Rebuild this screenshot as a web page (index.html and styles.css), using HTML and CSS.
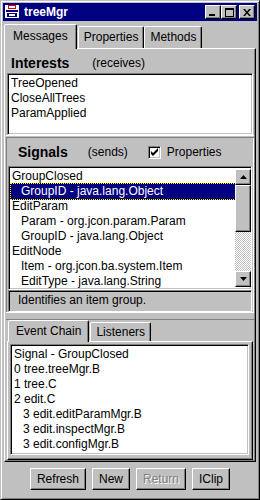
FILE: index.html
```html
<!DOCTYPE html>
<html lang="en">
<head>
    <meta charset="UTF-8">
    <title>treeMgr</title>
    <link rel="stylesheet" href="styles.css">
</head>
<body>
    <div class="window">
        <div class="titlebar">
            <svg class="app-icon" width="16" height="16" viewBox="0 0 16 16">
                <rect x="1" y="1" width="14" height="14" fill="#fff"/>
                <rect x="4" y="1" width="8" height="4" fill="#e00000"/>
                <rect x="5" y="2" width="6" height="2" fill="#fff"/>
                <rect x="2" y="6" width="12" height="2" fill="#000080"/>
                <rect x="3" y="9" width="10" height="4" fill="#000080"/>
                <rect x="5" y="10" width="6" height="2" fill="#fff"/>
                <rect x="1" y="14" width="14" height="1" fill="#000080"/>
            </svg>
            <span class="title">treeMgr</span>
            <div class="title-buttons">
                <span class="tbtn"><svg width="8" height="7" viewBox="0 0 8 7"><rect x="0" y="5" width="6" height="2" fill="#000"/></svg></span>
                <span class="tbtn"><svg width="9" height="9" viewBox="0 0 9 9"><rect x="0.5" y="0.5" width="8" height="8" fill="none" stroke="#000"/><rect x="0" y="0" width="9" height="2" fill="#000"/></svg></span>
                <span class="tbtn close"><svg width="8" height="7" viewBox="0 0 8 7"><path d="M0 0h2l2 2.5 2-2.5h2l-3 3.5 3 3.5h-2l-2-2.5-2 2.5h-2l3-3.5z" fill="#000"/></svg></span>
            </div>
        </div>

        <div class="tabs">
            <div class="tab active">Messages</div>
            <div class="tab">Properties</div>
            <div class="tab">Methods</div>
        </div>

        <div class="tab-panel">
            <div class="section-head interests-head">
                <span class="heading">Interests</span>
                <span class="note">(receives)</span>
            </div>
            <div class="list interests-list">
                <div class="row">TreeOpened</div>
                <div class="row">CloseAllTrees</div>
                <div class="row">ParamApplied</div>
            </div>

            <div class="splitter"></div>

            <div class="signals">
                <div class="section-head signals-head">
                    <span class="heading">Signals</span>
                    <span class="note">(sends)</span>
                    <span class="check"><svg width="9" height="9" viewBox="0 0 9 9"><path d="M1 3v3l2 2 5-5v-3l-5 5z" fill="#000"/></svg></span>
                    <span class="check-label">Properties</span>
                </div>
                <div class="scroll-list">
                    <div class="list-body">
                        <div class="row">GroupClosed</div>
                        <div class="row sub selected">GroupID - java.lang.Object</div>
                        <div class="row">EditParam</div>
                        <div class="row sub">Param - org.jcon.param.Param</div>
                        <div class="row sub">GroupID - java.lang.Object</div>
                        <div class="row">EditNode</div>
                        <div class="row sub">Item - org.jcon.ba.system.Item</div>
                        <div class="row sub">EditType - java.lang.String</div>
                    </div>
                    <div class="vscroll">
                        <span class="arrow"><svg width="7" height="4" viewBox="0 0 7 4"><path d="M3.5 0L7 4H0z" fill="#000"/></svg></span>
                        <span class="thumb"></span>
                        <span class="track"></span>
                        <span class="arrow"><svg width="7" height="4" viewBox="0 0 7 4"><path d="M0 0h7L3.5 4z" fill="#000"/></svg></span>
                    </div>
                </div>
                <div class="desc">Identifies an item group.</div>
            </div>

            <div class="splitter low"></div>

            <div class="chain">
                <div class="tabs small">
                    <div class="tab active">Event Chain</div>
                    <div class="tab">Listeners</div>
                </div>
                <div class="chain-panel">
                    <div class="list chain-list">
                        <div class="row">Signal - GroupClosed</div>
                        <div class="row">0 tree.treeMgr.B</div>
                        <div class="row">1 tree.C</div>
                        <div class="row">2 edit.C</div>
                        <div class="row sub">3 edit.editParamMgr.B</div>
                        <div class="row sub">3 edit.inspectMgr.B</div>
                        <div class="row sub">3 edit.configMgr.B</div>
                    </div>
                </div>
            </div>
        </div>

        <div class="buttons">
            <span class="btn">Refresh</span>
            <span class="btn">New</span>
            <span class="btn disabled">Return</span>
            <span class="btn">IClip</span>
        </div>
    </div>
</body>
</html>
```

FILE: styles.css
```css
* {
    margin: 0;
    padding: 0;
    box-sizing: border-box;
}

body {
    background: #c0c0c0;
    font-family: 'Liberation Sans', Arial, sans-serif;
    font-size: 12px;
    color: #000;
}

.window {
    width: 260px;
    height: 500px;
    background: #c0c0c0;
    border: 1px solid;
    border-color: #c0c0c0 #000 #000 #c0c0c0;
    box-shadow: inset 1px 1px #fff, inset -1px -1px #808080;
    padding: 2px 2px 0 2px;
    display: flex;
    flex-direction: column;
}

.window > * {
    flex-shrink: 0;
}

/* title bar */
.titlebar {
    height: 18px;
    background: #000080;
    display: flex;
    align-items: center;
    padding: 0 2px 0 1px;
}

.app-icon {
    display: block;
    margin-right: 4px;
}

.title {
    color: #fff;
    font-weight: bold;
    font-size: 12px;
    flex: 1;
}

.title-buttons {
    display: flex;
}

.tbtn {
    width: 16px;
    height: 14px;
    background: #c0c0c0;
    border: 1px solid;
    border-color: #fff #000 #000 #fff;
    box-shadow: inset -1px -1px #808080;
    display: flex;
    align-items: center;
    justify-content: center;
}

.tbtn.close {
    margin-left: 2px;
}

/* tabs */
.tabs {
    display: flex;
    align-items: flex-end;
    height: 24px;
    margin-top: 3px;
    padding-left: 1px;
    position: relative;
    z-index: 1;
}

.tab {
    height: 22px;
    padding: 0 5px;
    border: 1px solid;
    border-bottom: none;
    border-color: #fff #000 transparent #fff;
    box-shadow: inset -1px 0 #808080;
    border-radius: 2px 2px 0 0;
    line-height: 21px;
    background: #c0c0c0;
}

.tab.active {
    height: 25px;
    margin-bottom: -1px;
    padding: 0 8px;
    line-height: 23px;
}

.tabs .tab:first-child {
    margin-right: 1px;
}

.tab-panel {
    height: 414px;
    margin: 0 1px;
    border: 1px solid;
    border-color: #fff #000 #000 #fff;
    box-shadow: inset -1px -1px #808080;
    padding: 1px 2px 1px 2px;
    display: flex;
    flex-direction: column;
}

.tab-panel > * {
    flex-shrink: 0;
}

.section-head {
    display: flex;
    align-items: center;
}

.heading {
    font-weight: bold;
    font-size: 14px;
}

.interests-head {
    height: 23px;
    padding: 2px 0 0 4px;
}

.interests-head .note {
    margin-left: 23px;
}

/* lists */
.list, .scroll-list {
    background: #fff;
    border: 1px solid;
    border-color: #808080 #fff #fff #808080;
    box-shadow: inset 1px 1px #000, inset -1px -1px #c0c0c0;
    padding: 2px;
}

.row {
    height: 15px;
    line-height: 15px;
    white-space: nowrap;
    padding-left: 1px;
}

.row.sub {
    padding-left: 10px;
}

.interests-list {
    height: 62px;
}

.splitter {
    height: 3px;
    border-top: 1px solid #fff;
    border-bottom: 1px solid #808080;
    margin: 0 -1px;
}

.signals {
    border-left: 1px solid #808080;
    border-right: 1px solid #fff;
    margin: 0 -1px;
    padding: 0 1px;
}

.signals-head {
    height: 28px;
    padding: 0 0 0 10px;
}

.signals-head .note {
    margin-left: 20px;
}

.check {
    width: 13px;
    height: 13px;
    margin-left: 20px;
    background: #fff;
    border: 1px solid;
    border-color: #808080 #fff #fff #808080;
    box-shadow: inset 1px 1px #000, inset -1px -1px #c0c0c0;
    display: flex;
    align-items: center;
    justify-content: center;
}

.check-label {
    margin-left: 6px;
}

.scroll-list {
    height: 124px;
    display: flex;
    padding: 2px 0 2px 2px;
}

.list-body {
    flex: 1;
}

.row.selected {
    background: #000080;
    color: #fff;
    box-shadow: 0 0 0 1px #000;
    outline: 1px dotted #ff0;
    outline-offset: 0;
}

.vscroll {
    width: 16px;
    display: flex;
    flex-direction: column;
}

.arrow, .thumb {
    height: 16px;
    flex-shrink: 0;
    background: #c0c0c0;
    border: 1px solid;
    border-color: #fff #000 #000 #fff;
    box-shadow: inset -1px -1px #808080;
    display: flex;
    align-items: center;
    justify-content: center;
}

.thumb {
    height: 47px;
}

.track {
    flex: 1;
    background: repeating-conic-gradient(#c0c0c0 0 25%, #fff 0 50%) 0 0 / 2px 2px;
}

.desc {
    height: 22px;
    border: 1px solid;
    border-color: #808080 #fff #fff #808080;
    box-shadow: inset 1px 1px #000;
    padding-left: 9px;
    line-height: 19px;
}

.splitter.low {
    height: 8px;
}

/* event chain */
.tabs.small {
    margin-top: 0;
    height: 21px;
    padding-left: 1px;
}

.tabs.small .tab {
    height: 19px;
    line-height: 18px;
    padding: 0 5px;
}

.tabs.small .tab.active {
    height: 22px;
    padding: 0 7px;
    line-height: 21px;
}

.chain-panel {
    height: 119px;
    border: 1px solid;
    border-color: #fff #000 #000 #fff;
    box-shadow: inset -1px -1px #808080;
    padding: 2px 3px 3px 2px;
}

.chain-list {
    height: 111px;
}

/* bottom buttons */
.buttons {
    display: flex;
    justify-content: center;
    gap: 6px;
    padding-top: 6px;
}

.btn {
    height: 22px;
    padding: 0 6px;
    border: 1px solid;
    border-color: #fff #000 #000 #fff;
    box-shadow: inset -1px -1px #808080;
    line-height: 20px;
}

.btn.disabled {
    color: #808080;
    text-shadow: 1px 1px #fff;
}
```
